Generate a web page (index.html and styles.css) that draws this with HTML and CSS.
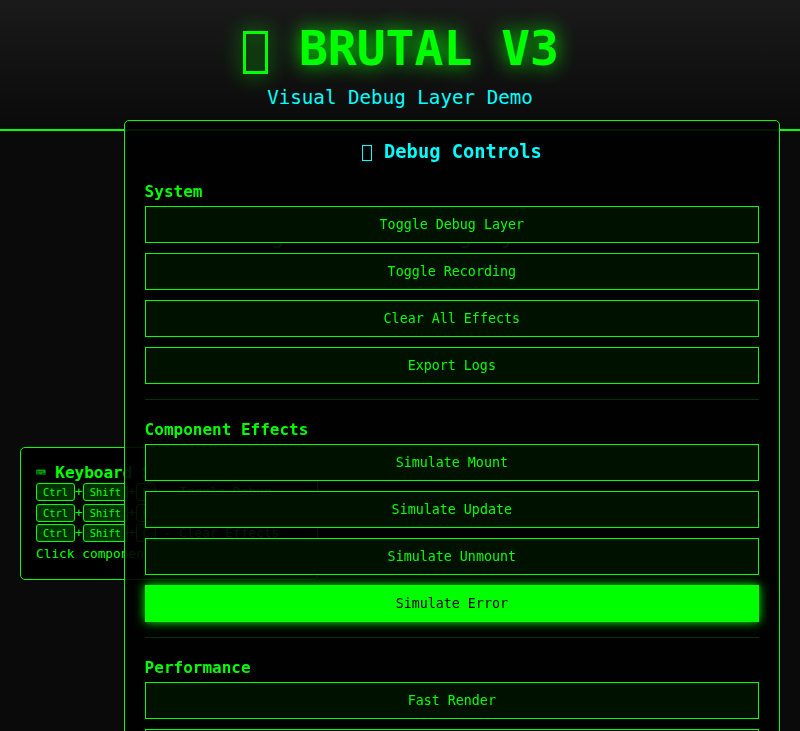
FILE: index.html
```html
<!DOCTYPE html>
<html lang="en">
<head>
<meta charset="utf-8">
<title>BRUTAL V3</title>
<link rel="stylesheet" href="styles.css">
</head>
<body>
<header class="header">
  <h1><span class="glyph-box"></span> BRUTAL V3</h1>
  <p>Visual Debug Layer Demo</p>
</header>
<main class="main">
  <h2>Flag Data Tracing System</h2>
</main>
<aside class="shortcuts">
  <h4>&#x2328;&#xFE0E; Keyboard Shortcuts</h4>
  <div><kbd>Ctrl</kbd>+<kbd>Shift</kbd>+<kbd>D</kbd> - Toggle Debug</div>
  <div><kbd>Ctrl</kbd>+<kbd>Shift</kbd>+<kbd>R</kbd> - Record</div>
  <div><kbd>Ctrl</kbd>+<kbd>Shift</kbd>+<kbd>C</kbd> - Clear Effects</div>
  <div class="hint">Click components</div>
</aside>
<section class="panel">
  <h3><span class="glyph-box"></span> Debug Controls</h3>
  <div class="group">
    <h4>System</h4>
    <button>Toggle Debug Layer</button>
    <button>Toggle Recording</button>
    <button>Clear All Effects</button>
    <button>Export Logs</button>
  </div>
  <div class="group">
    <h4>Component Effects</h4>
    <button>Simulate Mount</button>
    <button>Simulate Update</button>
    <button>Simulate Unmount</button>
    <button class="active">Simulate Error</button>
  </div>
  <div class="group">
    <h4>Performance</h4>
    <button>Fast Render</button>
    <button>Slow Render</button>
  </div>
</section>
</body>
</html>
```
FILE: styles.css
```css
* { box-sizing: border-box; margin: 0; padding: 0; }
html { height: 100%; overflow: hidden; }
body {
  height: 100%;
  overflow: hidden;
  background: #0a0a0a;
  color: #00ff00;
  font-family: "DejaVu Sans Mono", monospace;
  font-size: 16px;
}
.header {
  height: 131px;
  padding: 20px;
  text-align: center;
  background: linear-gradient(180deg, #1a1a1a 0%, #0a0a0a 100%);
  border-bottom: 2px solid #00ff00;
}
.header h1 {
  font-size: 48px;
  line-height: 56px;
  height: 56px;
  text-shadow: 0 0 20px #00ff00;
  margin-bottom: 11px;
}
.glyph-box { display: inline-block; border: 1px solid currentColor; }
.header .glyph-box {
  width: 25px;
  height: 43px;
  margin: 0 2px;
  border-width: 3px;
  vertical-align: -9px;
  filter: drop-shadow(0 0 10px #00ff00);
}
.header p { font-size: 19.2px; line-height: 22px; color: #00ffff; }
.main { padding: 90px 20px 20px; text-align: center; }
.main h2 { font-size: 24px; line-height: 28px; font-weight: normal; }
.shortcuts {
  position: fixed;
  left: 20px;
  top: 447px;
  width: 298px;
  height: 133px;
  padding: 15px;
  background: #000;
  border: 1px solid #00ff00;
  border-radius: 5px;
  font-size: 12.8px;
  line-height: 20.5px;
  white-space: nowrap;
}
.shortcuts h4 { font-size: 16px; line-height: 19px; height: 19px; }
kbd {
  display: inline-block;
  padding: 2px 6px;
  background: #003300;
  border: 1px solid #00ff00;
  border-radius: 3px;
  font-family: inherit;
  font-size: 10.4px;
  line-height: 12px;
}
.panel {
  position: fixed;
  top: 120px;
  right: 20px;
  width: 656.4px;
  height: 800px;
  padding: 20px;
  background: rgba(0, 0, 0, 0.9);
  border: 1px solid #00ff00;
  border-radius: 5px;
}
.panel h3 {
  height: 21px;
  margin-bottom: 20px;
  color: #00ffff;
  font-size: 18.72px;
  line-height: 21px;
  text-align: center;
}
.panel .glyph-box { width: 10px; height: 16px; margin-right: 1px; vertical-align: -3px; }
.group { padding-bottom: 15px; margin-bottom: 20px; border-bottom: 1px solid #003300; }
.group h4 { font-size: 16px; line-height: 19px; margin-bottom: 5px; }
.group button {
  display: block;
  width: 100%;
  height: 37px;
  margin-bottom: 10px;
  background: #001100;
  border: 1px solid #00ff00;
  color: #00ff00;
  font-family: inherit;
  font-size: 13.33px;
}
.group button:last-child { margin-bottom: 0; }
.group .active { background: #00ff00; color: #000; box-shadow: 0 0 10px #00ff00; }
```
